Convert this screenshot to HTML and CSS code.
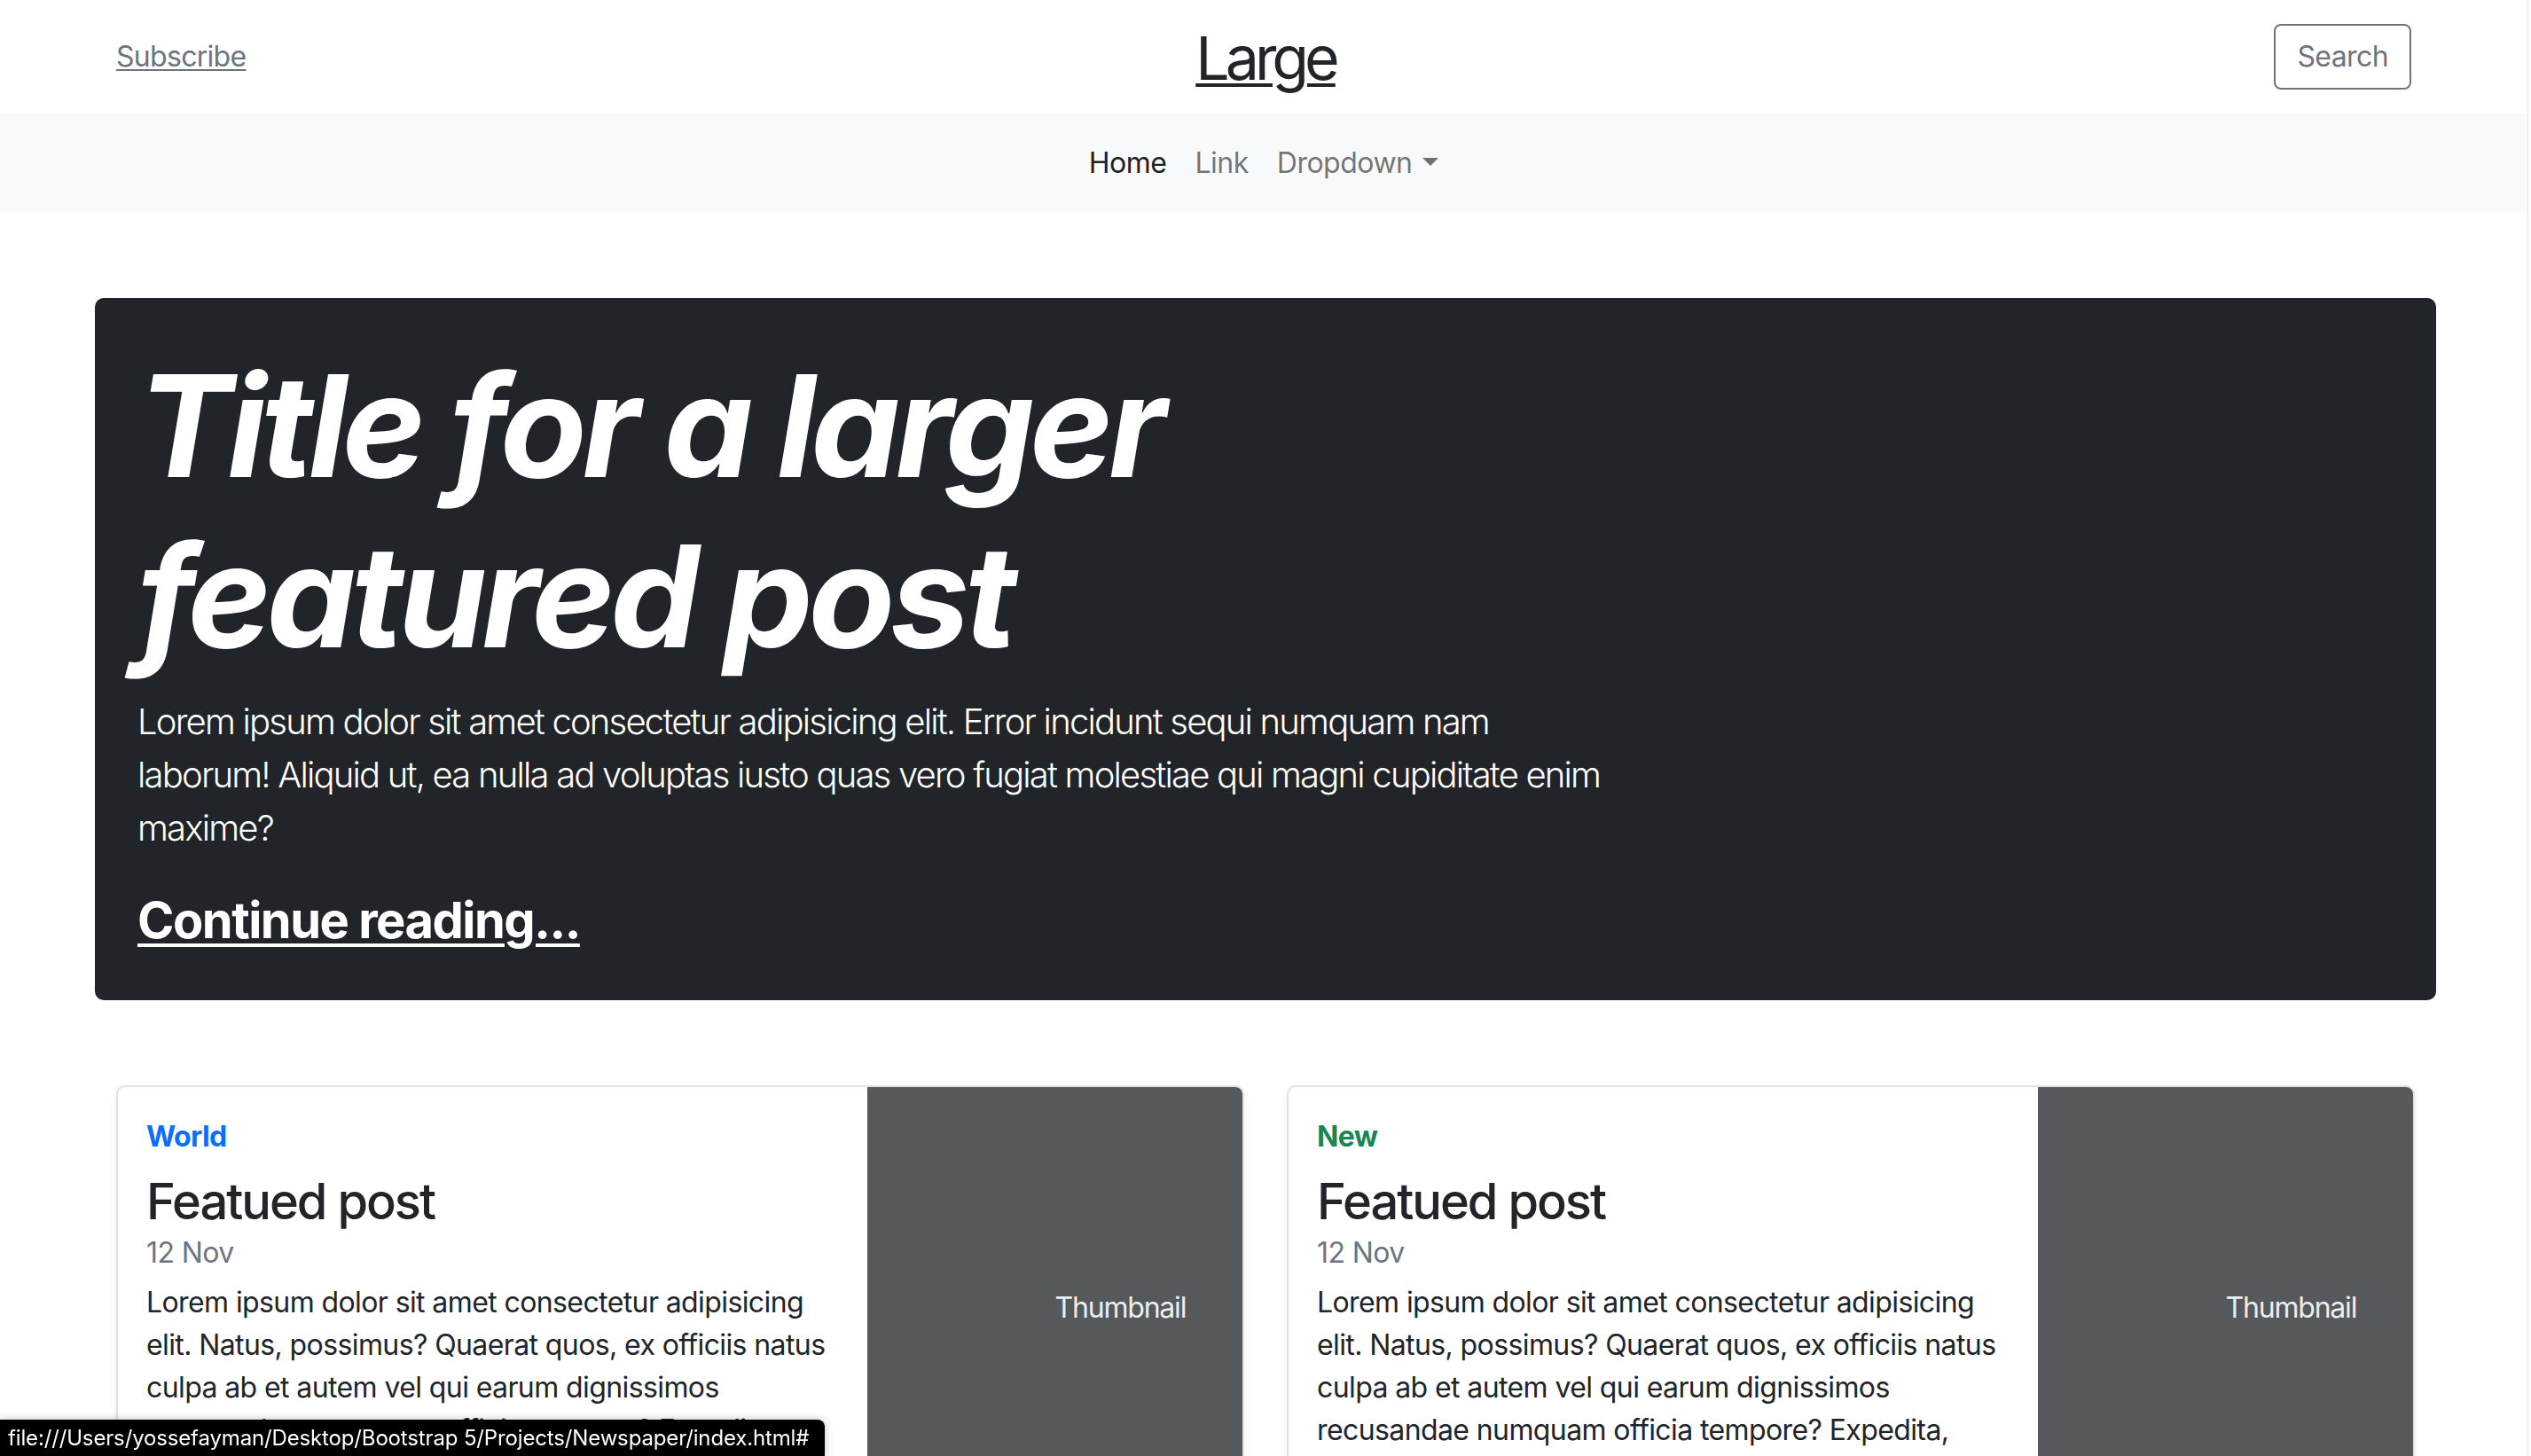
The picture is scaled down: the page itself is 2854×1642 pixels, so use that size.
FILE: index.html
```html
<!DOCTYPE html>
<html lang="en">
<head>
<meta charset="utf-8">
<title>Newspaper</title>
<link rel="stylesheet" href="styles.css">
</head>
<body>
<div class="container">
  <header class="top">
    <div class="top-col top-left"><a class="subscribe" href="#">Subscribe</a></div>
    <div class="top-col top-center"><a class="logo" href="#">Large</a></div>
    <div class="top-col top-right"><button class="btn-search" type="button">Search</button></div>
  </header>
</div>
<nav class="navbar">
  <ul class="nav">
    <li><a class="nav-link active" href="#">Home</a></li>
    <li><a class="nav-link" href="#">Link</a></li>
    <li><a class="nav-link" href="#">Dropdown <span class="caret"></span></a></li>
  </ul>
</nav>
<main class="container">
  <section class="hero">
    <div class="hero-col">
      <h1 class="hero-title">Title for a larger featured post</h1>
      <p class="lead">Lorem ipsum dolor sit amet consectetur adipisicing elit. Error incidunt sequi numquam nam laborum! Aliquid ut, ea nulla ad voluptas iusto quas vero fugiat molestiae qui magni cupiditate enim maxime?</p>
      <p class="continue"><a href="#">Continue reading...</a></p>
    </div>
  </section>
  <section class="cards">
    <article class="card">
      <div class="card-body">
        <strong class="tag world">World</strong>
        <h3 class="card-title">Featued post</h3>
        <div class="date">12 Nov</div>
        <p class="card-text">Lorem ipsum dolor sit amet consectetur adipisicing elit. Natus, possimus? Quaerat quos, ex officiis natus culpa ab et autem vel qui earum dignissimos recusandae numquam officia tempore? Expedita, nostrum.</p>
        <a class="card-link" href="#">Continue reading</a>
      </div>
      <div class="thumb">
        <svg class="thumb-svg" width="423" height="500" role="img" aria-label="Placeholder: Thumbnail">
          <rect width="100%" height="100%" fill="#55595c"></rect>
          <text x="50%" y="50%" dy=".3em" fill="#eceeef">Thumbnail</text>
        </svg>
      </div>
    </article>
    <article class="card">
      <div class="card-body">
        <strong class="tag new">New</strong>
        <h3 class="card-title">Featued post</h3>
        <div class="date">12 Nov</div>
        <p class="card-text">Lorem ipsum dolor sit amet consectetur adipisicing elit. Natus, possimus? Quaerat quos, ex officiis natus culpa ab et autem vel qui earum dignissimos recusandae numquam officia tempore? Expedita, nostrum.</p>
        <a class="card-link" href="#">Continue reading</a>
      </div>
      <div class="thumb">
        <svg class="thumb-svg" width="423" height="500" role="img" aria-label="Placeholder: Thumbnail">
          <rect width="100%" height="100%" fill="#55595c"></rect>
          <text x="50%" y="50%" dy=".3em" fill="#eceeef">Thumbnail</text>
        </svg>
      </div>
    </article>
  </section>
</main>
<div class="status">file:///Users/yossefayman/Desktop/Bootstrap 5/Projects/Newspaper/index.html#</div>
<div class="scroll-edge"></div>
</body>
</html>
```
FILE: styles.css
```css
* { box-sizing: border-box; }
html, body { margin: 0; padding: 0; background: #fff; }
body {
  font-family: Inter, "Noto Sans", "Liberation Sans", sans-serif;
  font-size: 32px;
  line-height: 1.5;
  color: #212529;
  letter-spacing: -0.6px;
}
.container { width: 2640px; margin: 0 auto; }

.top {
  display: flex;
  align-items: center;
  justify-content: space-between;
  height: 128px;
  padding: 0 24px;
}
.top-col { flex: 1 1 0; }
.top-center { text-align: center; }
.top-right { display: flex; justify-content: flex-end; }
.subscribe {
  color: #6c757d;
  letter-spacing: -0.7px;
  text-decoration: underline;
  text-decoration-thickness: 2px;
  text-underline-offset: 3px;
}
.logo {
  display: inline-block;
  padding-top: 6px;
  font-size: 68px;
  line-height: 1;
  letter-spacing: -5px;
  color: #212529;
  text-decoration: underline;
  text-decoration-thickness: 4px;
  text-underline-offset: 4px;
}
.btn-search {
  font-family: inherit;
  font-size: 32px;
  line-height: 48px;
  letter-spacing: -0.6px;
  color: #6c757d;
  background: transparent;
  border: 2px solid #6c757d;
  border-radius: 8px;
  padding: 11px 24px;
  margin-right: 4px;
}

.navbar {
  background: #f8f9fa;
  height: 112px;
  display: flex;
  align-items: center;
  justify-content: center;
  padding-right: 4px;
}
.nav { display: flex; list-style: none; margin: 0; padding: 0; }
.nav-link {
  display: block;
  padding: 0 16px;
  line-height: 48px;
  letter-spacing: -0.5px;
  color: rgba(0, 0, 0, .55);
  text-decoration: none;
}
.nav-link.active { color: rgba(0, 0, 0, .9); }
.caret {
  display: inline-block;
  vertical-align: .255em;
  border-top: .3em solid;
  border-right: .3em solid transparent;
  border-left: .3em solid transparent;
  margin-left: .1em;
}

.hero {
  margin-top: 96px;
  background: #212529;
  color: #fff;
  border-radius: 10px;
  padding: 48px;
}
.hero-col { width: 1674px; }
.hero-title {
  font-size: 160px;
  line-height: 192px;
  font-weight: 700;
  font-style: italic;
  letter-spacing: -5.5px;
  margin: 0 0 16px;
}
.lead {
  font-size: 40px;
  line-height: 60px;
  font-weight: 300;
  letter-spacing: -1.8px;
  margin: 0 0 32px;
}
.continue {
  font-size: 56px;
  line-height: 84px;
  font-weight: 700;
  letter-spacing: -1.5px;
  margin: 0;
}
.continue a {
  color: #fff;
  text-decoration: underline;
  text-decoration-thickness: 4px;
  text-underline-offset: 6px;
}

.cards {
  margin-top: 96px;
  padding: 0 24px;
  display: grid;
  grid-template-columns: 1fr 1fr;
  column-gap: 48px;
}
.card {
  display: flex;
  border: 2px solid #dee2e6;
  border-radius: 10px;
  overflow: hidden;
  box-shadow: 0 4px 8px rgba(0, 0, 0, .075);
  margin-bottom: 48px;
}
.card-body {
  flex: 1 1 auto;
  padding: 32px;
  display: flex;
  flex-direction: column;
  align-items: flex-start;
}
.tag { display: inline-block; font-weight: 700; margin-bottom: 16px; }
.tag.world { color: #0d6efd; }
.tag.new { color: #198754; }
.card-title {
  font-size: 56px;
  line-height: 1.2;
  font-weight: 500;
  letter-spacing: -2px;
  margin: 0;
}
.date { color: #6c757d; margin-bottom: 8px; }
.card-text { margin: 0 0 16px; }
.card-link { color: #0d6efd; }
.thumb { flex: 0 0 423px; }
.thumb-svg {
  display: block;
  font-family: Inter, "Noto Sans", sans-serif;
  font-size: 32px;
  letter-spacing: -1.2px;
}

.status {
  position: fixed;
  left: 0;
  bottom: 0;
  height: 41px;
  width: 930px;
  padding: 0 0 0 9px;
  background: #000;
  color: #fff;
  font-size: 24px;
  line-height: 41px;
  letter-spacing: -0.15px;
  white-space: nowrap;
  overflow: hidden;
  border-top-right-radius: 8px;
  box-shadow: 0 0 10px rgba(0, 0, 0, .25);
}
.scroll-edge {
  position: fixed;
  top: 0;
  right: 0;
  bottom: 0;
  width: 4px;
  background: #fff;
  border-left: 1px solid #e4e4e4;
}
```
